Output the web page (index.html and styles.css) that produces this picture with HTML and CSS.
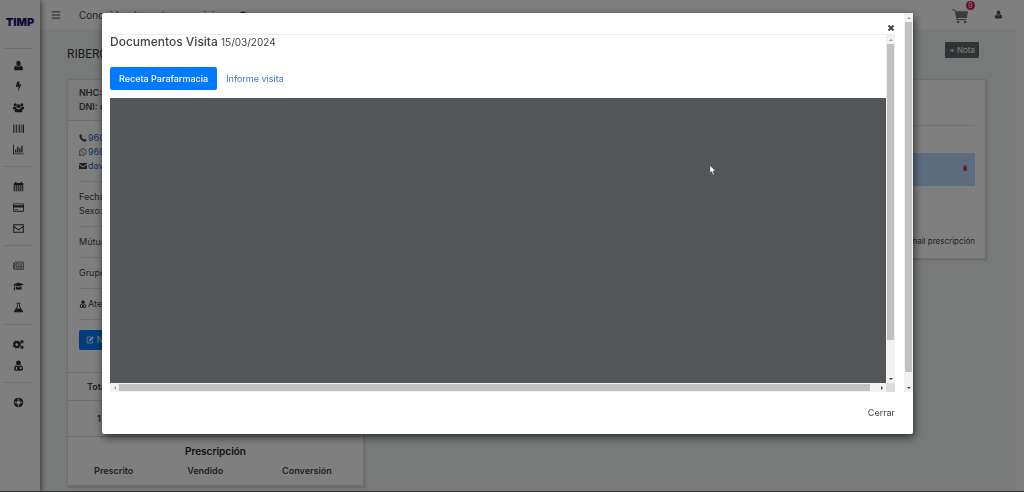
FILE: index.html
```
<!DOCTYPE html>
<html lang="es">
<head>
<meta charset="utf-8">
<title>TIMP - Documentos Visita</title>
<link rel="stylesheet" href="styles.css">
</head>
<body>
<div class="app">
  <aside class="sidebar">
    <a class="logo" href="#">TIMP</a>
    <nav class="menu">
      <div class="group">
        <a href="#" aria-label="Clientes"><svg viewBox="0 0 16 16"><path d="M8 1c2 0 3.200 1.500 3.200 3.700S9.800 9 8 9 4.800 7 4.800 4.700 6 1 8 1zM4.500 8c2 2.400 5 2.400 7 0 2 .7 3 2.500 3 5 0 1.300-.8 2-2 2h-9c-1.200 0-2-.7-2-2 0-2.500 1-4.300 3-5z"/></svg></a>
        <a href="#" aria-label="Actividad"><svg viewBox="0 0 16 16"><path d="M6 1h4L8.500 5l4-.8L7 15.500 8.300 8 4 9z"/></svg></a>
        <a href="#" aria-label="Grupos"><svg viewBox="0 0 16 16"><circle cx="3.200" cy="4" r="2.200"/><circle cx="12.800" cy="4" r="2.200"/><circle cx="8" cy="6" r="2.900"/><path d="M0 7h4.500c0 1.300.3 2 .9 2.600L3 11H1.500C.5 11 0 10 0 9zM16 7h-4.500c0 1.300-.3 2-.9 2.600L13 11h1.500c1 0 1.500-1 1.500-2zM5 9.500c2 1.300 4 1.300 6 0 1.800.5 2.500 2 2.500 4 0 1-.6 1.500-1.500 1.500H4c-.9 0-1.500-.5-1.500-1.500 0-2 .7-3.500 2.500-4z"/></svg></a>
        <a href="#" aria-label="Productos"><svg viewBox="0 0 16 16"><path d="M0 2h1v12H0zM2 2h.6v12H2zM4 2h1.500v12H4zM7 2h.7v12H7zM9 2h1.500v12H9zM12 2h.7v12H12zM14 2h2v12h-2z"/></svg></a>
        <a href="#" aria-label="Informes"><svg viewBox="0 0 16 16"><path d="M0 1h1.300v12.700H16V15H0zM3 8h2v4.500H3zM6 4h2v8.500H6zM9 6h2v6.500H9zM12 2.500h2v10h-2z"/></svg></a>
      </div>
      <div class="group">
        <a href="#" aria-label="Calendario"><svg viewBox="0 0 16 16"><path fill-rule="evenodd" d="M1 3h2V1h2v2h6V1h2v2h2v12H1zM2.300 6.500v2h2.300v-2zM5.600 6.500v2h2v-2zM8.600 6.500v2h2v-2zM11.600 6.500v2h2v-2zM2.300 9.500v1.700h2.300V9.500zM5.600 9.500v1.700h2V9.500zM8.600 9.500v1.700h2V9.500zM11.600 9.500v1.700h2V9.500zM2.300 12.300V14h2.300v-1.700zM5.600 12.300V14h2v-1.700zM8.600 12.300V14h2v-1.700zM11.600 12.300V14h2v-1.700z"/></svg></a>
        <a href="#" aria-label="Pagos"><svg viewBox="0 0 16 16"><path fill-rule="evenodd" d="M1.500 2h13c.8 0 1.500.6 1.500 1.400v9.200c0 .8-.7 1.400-1.500 1.400h-13C.7 14 0 13.400 0 12.600V3.400C0 2.600.7 2 1.500 2zM1.200 3.200v1.600h13.600V3.200zM1.200 8v4.800h13.600V8zM2.500 10.500H7v1.200H2.500z"/></svg></a>
        <a href="#" aria-label="Mensajes"><svg viewBox="0 0 16 16"><path class="line" d="M1 2.500h14v11H1zM1 5l7 5 7-5"/></svg></a>
      </div>
      <div class="group">
        <a href="#" aria-label="Noticias"><svg viewBox="0 0 16 16"><path class="line thin" d="M2.500 3h13v10.500H1.500L.6 12V5h2v7.500M4.500 5.500h4v4h-4zM10 5.500h4M10 7.500h4M10 9.500h4M4.500 11.500H14"/></svg></a>
        <a href="#" aria-label="Formación"><svg viewBox="0 0 16 16"><path d="M8 2l8 3-8 3-5.500-2v3.500l.7 4H1l.6-4v-4L0 5zM4 7.700l4 1.600 4.500-1.700v3.900c-2.500 1.700-6 1.700-8.500 0z"/></svg></a>
        <a href="#" aria-label="Laboratorio"><svg viewBox="0 0 16 16"><path fill-rule="evenodd" d="M5 1h6v1.300h-1v4l4.500 7c.6 1-.1 1.700-1 1.700h-11c-.9 0-1.600-.7-1-1.700l4.500-7v-4H5zM7.200 2.300v4.500L5.300 9.500h5.400L8.800 6.800V2.300z"/></svg></a>
      </div>
      <div class="group">
        <a href="#" aria-label="Configuración"><svg viewBox="0 0 16 16"><circle class="gear" cx="5.500" cy="8" r="3.500"/><circle class="teeth" cx="5.500" cy="8" r="5"/><circle class="cog" cx="13" cy="4" r="1.600"/><circle class="cog" cx="13" cy="12" r="1.600"/></svg></a>
        <a href="#" aria-label="Profesionales"><svg viewBox="0 0 16 16"><use href="#doctor"/></svg></a>
      </div>
      <div class="group">
        <a href="#" aria-label="Ayuda"><svg viewBox="0 0 16 16"><circle class="ring" cx="8" cy="8" r="5"/><path class="gaps" d="M8 2v3.500M8 10.500V14M2 8h3.500M10.500 8H14"/></svg></a>
      </div>
    </nav>
  </aside>

  <div class="content">
    <header class="topbar">
      <button class="plain" aria-label="Menú"><svg viewBox="0 0 16 16"><path class="line" d="M1 3h14M1 8h14M1 13h14"/></svg></button>
      <span class="notice">Conocidos / nuestros servicios <svg viewBox="0 0 16 16"><circle cx="8" cy="8" r="7"/></svg></span>
      <div class="tools">
        <button class="plain cart" aria-label="Carrito"><svg viewBox="0 0 18 16"><path d="M0 1h3.500l.7 2H17l-1.300 7H6l.2 1.300H15v1.200H5L2.700 2.300H0z"/><circle cx="6.500" cy="14.300" r="1.400"/><circle cx="14" cy="14.300" r="1.400"/></svg><span class="badge">0</span></button>
        <button class="plain user" aria-label="Usuario"><svg viewBox="0 0 16 16"><path d="M8 1c2 0 3.200 1.500 3.200 3.700S9.800 9 8 9 4.800 7 4.800 4.700 6 1 8 1zM4.500 8c2 2.400 5 2.400 7 0 2 .7 3 2.500 3 5 0 1.300-.8 2-2 2h-9c-1.200 0-2-.7-2-2 0-2.500 1-4.300 3-5z"/></svg></button>
      </div>
    </header>

    <main class="page">
      <div class="heading">
        <h1>RIBERO</h1>
        <button class="note">+ Nota</button>
      </div>
      <div class="columns">
        <section class="card patient">
          <div class="ids"><div>NHC:</div><div>DNI: d</div></div>
          <div class="details">
            <div class="contact"><svg viewBox="0 0 16 16"><path d="M1 2l3-1.500 2.500 4-1.700 1.700c1 2 2.500 3.700 4.700 4.800l1.800-1.700 4 2.500L14 15C7 16.500 0 9 1 2z"/></svg><a href="#">960</a></div>
            <div class="contact"><svg viewBox="0 0 16 16"><path class="line" d="M1 15l1-4a6.500 6.500 0 1 1 3 3zM5.500 5c0 3 2.500 5.500 5.500 5.500"/></svg><a href="#">960</a></div>
            <div class="contact"><svg viewBox="0 0 16 16"><path d="M0 2h16v1.500L8 9 0 3.500zM0 5.500L8 11l8-5.500V14H0z"/></svg><a href="#">dav</a></div>
            <hr>
            <div>Fecha</div>
            <div>Sexo:</div>
            <hr>
            <div>Mútua</div>
            <hr>
            <div>Grupo</div>
            <hr>
            <div class="contact"><svg viewBox="0 0 16 16"><g id="doctor"><circle cx="8" cy="4.300" r="3.600"/><path fill-rule="evenodd" d="M4.500 7.800C6.500 9.500 9.500 9.500 11.500 7.800c2.200.7 3 2.600 3 5.200 0 1.300-.8 2.500-2 2.500h-9c-1.200 0-2-1.200-2-2.500 0-2.600.8-4.500 3-5.200zM4 10v4h2v-4zM10 10v3h2.500v-3z"/></g></svg>Atenc</div>
            <hr>
            <button class="edit"><svg viewBox="0 0 16 16"><path class="line" d="M11 2H2v12h11V9"/><path d="M13 1l2.500 2.500L8.500 10.500 5.500 11 6 8z"/></svg> Nuevo</button>
          </div>
          <table>
            <tbody>
              <tr class="totals"><th>Total</th><th></th><th></th></tr>
              <tr class="amounts"><td>1</td><td></td><td></td></tr>
              <tr class="title"><th colspan="3">Prescripción</th></tr>
              <tr><th>Prescrito</th><th>Vendido</th><th>Conversión</th></tr>
            </tbody>
          </table>
        </section>
        <section class="card visits">
          <hr>
          <div class="alert"><button class="plain" aria-label="Eliminar"><svg viewBox="0 0 16 16"><path d="M2 2h4V0h4v2h4v2H2zM3 5h10l-1 11H4z"/></svg></button></div>
          <p>Enviar email prescripción</p>
        </section>
      </div>
    </main>
  </div>
</div>

<div class="backdrop">
  <div class="modal" role="dialog" aria-modal="true" aria-labelledby="title">
    <div class="modal-main">
      <div class="modal-body">
        <div class="modal-head"><button class="plain" aria-label="Cerrar ventana"><svg viewBox="0 0 16 16"><path class="cross" d="M3 3l10 10M13 3L3 13"/></svg></button></div>
        <div class="frame">
          <div class="document">
            <h2 id="title">Documentos Visita <small>15/03/2024</small></h2>
            <div class="tabs"><button class="tab active">Receta Parafarmacia</button><button class="tab">Informe visita</button></div>
            <div class="viewer"></div>
          </div>
          <div class="bar vertical inner"><i class="up"></i><b></b><i class="down"></i></div>
          <div class="bar horizontal"><i class="left"></i><b></b><i class="right"></i></div>
          <div class="corner"></div>
        </div>
      </div>
      <div class="bar vertical outer"><i class="up"></i><b></b><i class="down"></i></div>
    </div>
    <footer><button class="plain">Cerrar</button></footer>
  </div>
</div>
<svg class="pointer" viewBox="0 0 8 12"><path d="M1 0v9l2-2 1.500 4 1.500-.6L4.600 6.600H7.500z"/></svg>
</body>
</html>
```
FILE: styles.css
```
* { box-sizing: border-box; }
body {
  margin: 0;
  height: 100vh;
  overflow: hidden;
  font: 9px/14px Inter, "Open Sans", sans-serif;
  color: #444;
  background: #fff;
}
a { color: #2a62c9; text-decoration: none; }
button { font: inherit; color: inherit; cursor: pointer; border: 0; padding: 0; }
svg { width: 10px; height: 10px; fill: currentColor; }
.line { fill: none; stroke: currentColor; stroke-width: 1.5; }
.thin { stroke-width: 1; }
hr { margin: 8px 0; border: 0; border-top: 1px solid #e4e4e4; }
.plain { display: flex; background: none; }

.app { display: flex; height: 100vh; }
.sidebar {
  flex: none;
  width: 40px;
  z-index: 1;
  background: #fff;
  box-shadow: 1px 0 6px rgba(0, 0, 0, .6);
}
.logo {
  display: block;
  height: 48px;
  padding-top: 15px;
  text-align: center;
  font-size: 11px;
  font-weight: 900;
  color: #1c1470;
}
.group { margin: 0 7px 0 4px; padding: 9px 0 6px; border-top: 1px solid #e2e2e2; }
.group:first-child { padding-top: 6px; }
.group a { display: flex; height: 21px; align-items: center; justify-content: center; color: #333; }
.menu svg { width: 11px; height: 11px; }
.gear { fill: none; stroke: currentColor; stroke-width: 3; }
.teeth { fill: none; stroke: currentColor; stroke-width: 2; stroke-dasharray: 2 2; }
.cog { fill: none; stroke: currentColor; stroke-width: 2; }
.ring { fill: none; stroke: currentColor; stroke-width: 4; }
.gaps { stroke: #bbb; stroke-width: 2; }

.content { flex: 1; margin-right: 8px; background: #f0f5f5; }
.topbar {
  display: flex;
  align-items: center;
  gap: 18px;
  height: 30px;
  padding: 0 13px 1px 11px;
  background: #fff;
}
.notice { display: flex; align-items: center; gap: 14px; font-size: 10px; }
.notice svg { width: 8px; height: 8px; }
.tools { display: flex; align-items: center; gap: 25px; margin-left: auto; color: #555; }
.user svg { width: 9px; height: 9px; }
.cart { position: relative; margin-top: 3px; color: #777; }
.cart svg { width: 17px; height: 16px; }
.badge {
  position: absolute;
  top: -7px;
  right: -6px;
  width: 9px;
  border-radius: 5px;
  background: #d81b50;
  color: #fff;
  font-size: 7px;
  line-height: 9px;
}
.page { padding: 12px 30px 0 27px; }
.heading { display: flex; align-items: flex-start; justify-content: space-between; height: 37px; padding-right: 7px; }
h1 { margin: 5px 0 0; font: 12px/14px Roboto, sans-serif; color: #333; }
.note { height: 16px; padding: 0 4px; border-radius: 1px; background: #5f676a; color: #fff; font-size: 8px; }
.columns { display: flex; align-items: flex-start; gap: 10px; }
.card { background: #fff; border: 1px solid #dedede; box-shadow: 1px 1px 2px rgba(0, 0, 0, .15); }
.patient { flex: 0 0 297px; }
.ids { padding: 6px 11px; border-bottom: 1px solid #ddd; background: #f8f8f8; font-weight: 600; }
.details { padding: 10px 11px 22px; }
.details svg { width: 8px; height: 8px; vertical-align: -1px; }
.contact { display: flex; align-items: center; gap: 1px; }
.edit { height: 20px; margin-top: 2px; padding: 0 7px; border-radius: 2px; background: #007bff; color: #fff; }
table { width: 100%; border-collapse: collapse; table-layout: fixed; text-align: center; }
th, td { height: 28px; padding: 0; border-top: 1px solid #ddd; border-bottom: 1px solid #ddd; font-weight: 600; }
th:nth-child(3) { width: 38%; }
.totals th:first-child { padding-left: 19px; text-align: left; }
.amounts td { height: 36px; }
.amounts td:first-child { padding-left: 29px; text-align: left; }
.title th { height: 21px; padding-top: 7px; border-bottom: 0; font-size: 10px; color: #222; }
.title + tr th { height: 27px; border-top: 0; }
.visits { flex: 1; padding: 37px 10px 10px; }
.visits hr { margin-bottom: 27px; }
.alert { display: flex; align-items: center; justify-content: flex-end; height: 33px; padding: 0 7px 4px 0; background: #b8daff; color: #dc3545; }
.alert svg { width: 6px; height: 8px; }
.visits p { margin: 48px 0 0; text-align: right; font-size: 8px; }

.backdrop {
  position: fixed;
  inset: 0;
  z-index: 2;
  padding: 13px 111px 57px 102px;
  border-bottom: 1px solid #333;
  background: rgba(0, 0, 0, .5);
}
.modal {
  display: flex;
  flex-direction: column;
  height: 100%;
  border-radius: 2px;
  background: #fff;
  box-shadow: 1px 3px 9px rgba(0, 0, 0, .65);
}
.modal-main { display: flex; flex: 1; min-height: 0; }
.modal-body { display: flex; flex: 1; flex-direction: column; padding: 0 9px 0 8px; }
.modal-head { display: flex; align-items: flex-end; justify-content: flex-end; height: 22px; padding-bottom: 2px; border-bottom: 1px solid #eee; }
.modal-head svg { width: 8px; height: 8px; }
.cross { fill: none; stroke: currentColor; stroke-width: 4; }
.frame { display: grid; flex: 1; grid-template: 1fr 9px / 1fr 9px; }
.document { display: flex; flex-direction: column; }
h2 { margin: 0 0 18px; font-size: 12px; line-height: 14px; font-weight: 500; }
h2 small { font-size: 10px; font-weight: 400; }
.tabs { display: flex; margin-bottom: 8px; }
.tab { height: 23px; padding: 0 9px; border-radius: 2px; background: none; color: #3379d8; }
.tab.active { background: #007bff; color: #fff; font-weight: 500; }
.viewer { flex: 1; background: #525659; }
.bar { display: flex; background: #f1f1f1; }
.bar b { flex: 1; background: #c1c1c1; }
.vertical { flex-direction: column; width: 9px; padding: 0 1px; }
.vertical i { height: 9px; }
.inner b { flex: 0 1 85%; }
.inner .down { margin-top: auto; }
.outer b { flex: 0 1 350px; }
.outer .down { margin-top: auto; }
.horizontal { padding: 1px 0; }
.horizontal i { width: 9px; }
.horizontal .right { width: 16px; padding-left: 8px; }
.corner { background: #dcdcdc; }
.bar i { display: flex; align-items: center; justify-content: center; }
.bar i::before { content: ""; border: 2px solid transparent; }
.bar .up::before { border-bottom-color: #999; border-top: 0; }
.bar .down::before { border-top-color: #444; border-bottom: 0; }
.bar .left::before { border-right-color: #999; border-left: 0; }
.bar .right::before { border-left-color: #444; border-right: 0; }
footer { display: flex; flex: none; align-items: center; justify-content: flex-end; height: 42px; padding-right: 18px; }
.pointer {
  position: absolute;
  top: 165px;
  left: 709px;
  z-index: 3;
  width: 7px;
  height: 11px;
  fill: #fff;
  stroke: #222;
  stroke-width: .5px;
}
```
